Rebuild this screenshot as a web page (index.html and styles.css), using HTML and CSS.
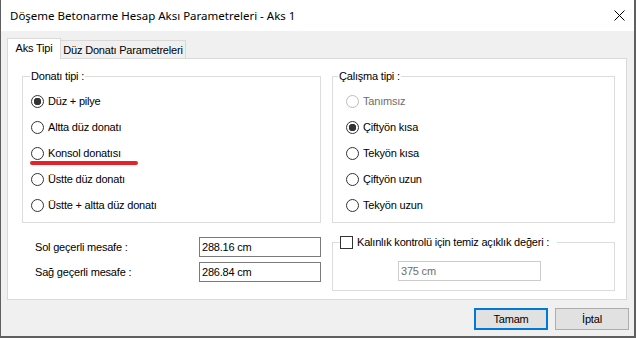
FILE: index.html
```html
<!DOCTYPE html>
<html lang="tr">
<head>
    <meta charset="UTF-8">
    <meta name="viewport" content="width=device-width, initial-scale=1.0">
    <title>Döşeme Betonarme Hesap Aksı Parametreleri - Aks 1</title>
    <link rel="stylesheet" href="styles.css">
</head>
<body>
    <div class="window">
        <div class="titlebar">
            <span class="title">Döşeme Betonarme Hesap Aksı Parametreleri - Aks 1</span>
            <span class="close-btn" title="Kapat">
                <svg width="11" height="11" viewBox="0 0 11 11"><path d="M0.5 0.5L10.5 10.5M10.5 0.5L0.5 10.5" stroke="#000" stroke-width="1" fill="none"/></svg>
            </span>
        </div>
        <div class="dialog-body">
            <div class="tabs">
                <div class="tab active">Aks Tipi</div>
                <div class="tab">Düz Donatı Parametreleri</div>
            </div>
            <div class="tab-panel">
                <fieldset class="group group-donati">
                    <legend>Donatı tipi :</legend>
                    <label class="radio-row"><input type="radio" name="donati" checked>Düz + pilye</label>
                    <label class="radio-row"><input type="radio" name="donati">Altta düz donatı</label>
                    <label class="radio-row"><input type="radio" name="donati">Konsol donatısı</label>
                    <label class="radio-row"><input type="radio" name="donati">Üstte düz donatı</label>
                    <label class="radio-row"><input type="radio" name="donati">Üstte + altta düz donatı</label>
                    <span class="mark-line"></span>
                </fieldset>
                <fieldset class="group group-calisma">
                    <legend>Çalışma tipi :</legend>
                    <label class="radio-row disabled"><input type="radio" name="calisma" disabled>Tanımsız</label>
                    <label class="radio-row"><input type="radio" name="calisma" checked>Çiftyön kısa</label>
                    <label class="radio-row"><input type="radio" name="calisma">Tekyön kısa</label>
                    <label class="radio-row"><input type="radio" name="calisma">Çiftyön uzun</label>
                    <label class="radio-row"><input type="radio" name="calisma">Tekyön uzun</label>
                </fieldset>
                <div class="distances">
                    <div class="field-row">
                        <span class="field-label">Sol geçerli mesafe :</span>
                        <input class="text-input" type="text" value="288.16 cm">
                    </div>
                    <div class="field-row">
                        <span class="field-label">Sağ geçerli mesafe :</span>
                        <input class="text-input" type="text" value="286.84 cm">
                    </div>
                </div>
                <fieldset class="group group-kalinlik">
                    <legend><label class="check-row"><input type="checkbox">Kalınlık kontrolü için temiz açıklık değeri :</label></legend>
                    <input class="text-input" type="text" value="375 cm" disabled>
                </fieldset>
            </div>
            <div class="buttons">
                <button class="btn default">Tamam</button>
                <button class="btn">İptal</button>
            </div>
        </div>
    </div>
</body>
</html>
```

FILE: styles.css
```css
* {
    box-sizing: border-box;
}
html, body {
    margin: 0;
    padding: 0;
}
body {
    background-color: #5f5f5f;
    font-family: "Liberation Sans", Arial, sans-serif;
    font-size: 11px;
    letter-spacing: -0.2px;
    color: #000;
}
.window {
    width: 635px;
    height: 337px;
    display: flex;
    flex-direction: column;
    background-color: #f0f0f0;
    border: 1px solid #5f5f5f;
    border-top: none;
}
.titlebar {
    height: 31px;
    flex: none;
    display: flex;
    align-items: center;
    justify-content: space-between;
    background-color: #fff;
    padding: 0 9px 0 9px;
}
.title {
    font-family: "Noto Sans", sans-serif;
    font-size: 11.5px;
    letter-spacing: 0;
}
.close-btn {
    display: flex;
    margin-top: -1px;
}
.dialog-body {
    flex: 1;
    display: flex;
    flex-direction: column;
    padding: 7px 7px 0 6px;
}
.tabs {
    display: flex;
    align-items: flex-end;
    height: 20px;
}
.tab {
    height: 18px;
    padding: 0;
    display: flex;
    align-items: center;
    justify-content: center;
    white-space: nowrap;
    border: 1px solid #d9d9d9;
    border-bottom: none;
    border-left: none;
    width: 125px;
}
.tab.active {
    width: 54px;
    height: 21px;
    margin-bottom: -1px;
    border-left: 1px solid #d9d9d9;
    background-color: #fff;
    position: relative;
    z-index: 1;
    padding-bottom: 2px;
}
.tab-panel {
    width: 620px;
    height: 242px;
    background-color: #fff;
    border: 1px solid #d9d9d9;
    padding: 11px 11px 0 14px;
    display: grid;
    grid-template-columns: 299px 283px;
    grid-template-rows: 153px 55px;
    column-gap: 11px;
    row-gap: 13px;
}
.group {
    margin: 0;
    border: 1px solid #dcdcdc;
    min-width: 0;
}
.group legend {
    padding: 0 1px;
    margin-left: -1px;
    line-height: 13px;
    height: 13px;
}
.group-donati {
    position: relative;
    padding: 5px 0 4px 8px;
}
.group-calisma {
    padding: 5px 0 4px 6px;
}
.group-calisma .radio-row {
    padding-left: 7px;
}
.radio-row {
    display: flex;
    align-items: center;
    height: 26px;
}
.radio-row input,
.check-row input {
    appearance: none;
    -webkit-appearance: none;
    width: 13px;
    height: 13px;
    margin: 0 4px 0 0;
    border: 1px solid #333;
    background-color: #fff;
    flex: none;
}
.radio-row input {
    border-radius: 50%;
}
.radio-row input:checked {
    background: radial-gradient(circle, #333 0 3.5px, #fff 4px);
}
.radio-row.disabled {
    color: #6d6d6d;
}
.radio-row.disabled input {
    border-color: #bcbcbc;
}
.mark-line {
    position: absolute;
    left: 7px;
    top: 78px;
    width: 108px;
    height: 4px;
    border-radius: 2px;
    background-color: #e8202c;
}
.distances {
    padding: 1px 0 0 13px;
    display: flex;
    flex-direction: column;
    gap: 5px;
}
.field-row {
    display: flex;
    align-items: center;
}
.field-label {
    width: 164px;
}
.text-input {
    width: 122px;
    height: 20px;
    border: 1px solid #7a7a7a;
    padding: 0 2px;
    font-family: "Liberation Sans", Arial, sans-serif;
    font-size: 11px;
    letter-spacing: -0.2px;
    color: #000;
    background-color: #fff;
    outline: none;
}
.group-kalinlik {
    padding: 12px 0 9px 7px;
}
.group-kalinlik legend {
    padding: 0 8px 0 0;
    margin-left: 0;
}
.check-row {
    display: flex;
    align-items: center;
}
.group-kalinlik .text-input {
    width: 143px;
    margin-left: 58px;
    border-color: #cccccc;
    color: #6d6d6d;
    display: block;
}
.buttons {
    display: flex;
    justify-content: flex-end;
    gap: 7px;
    margin-top: 8px;
    margin-right: -2px;
}
.btn {
    width: 74px;
    height: 22px;
    background-color: #e1e1e1;
    border: 1px solid #adadad;
    font-family: "Liberation Sans", Arial, sans-serif;
    font-size: 11px;
    letter-spacing: -0.2px;
    color: #000;
    padding: 0;
}
.btn.default {
    border: 2px solid #0078d7;
}
```
